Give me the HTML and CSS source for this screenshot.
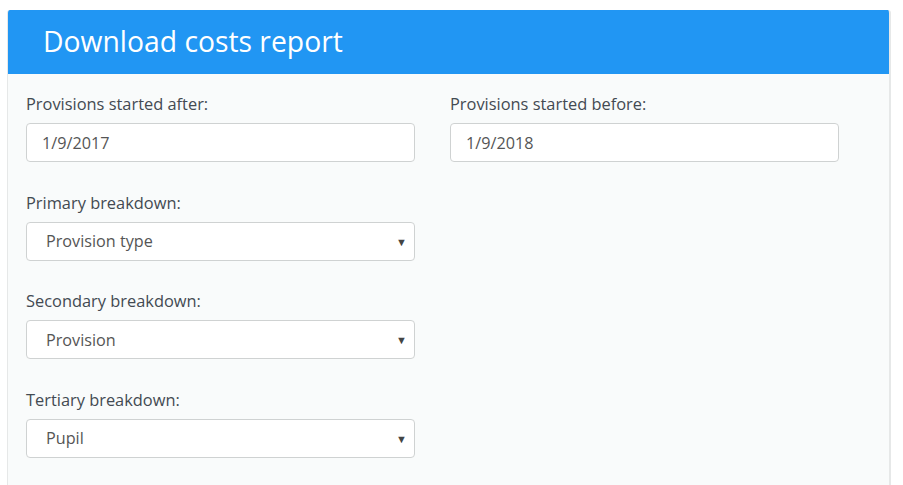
FILE: index.html
```html
<!DOCTYPE html>
<html>
<head>
<meta charset="utf-8">
<link rel="stylesheet" href="styles.css">
</head>
<body>
<div class="card">
  <div class="card-header">Download costs report</div>
  <div class="card-body">
    <div class="row">
      <div class="field">
        <label class="label">Provisions started after:</label>
        <div class="control">1/9/2017</div>
      </div>
      <div class="field">
        <label class="label">Provisions started before:</label>
        <div class="control">1/9/2018</div>
      </div>
    </div>
    <div class="field">
      <label class="label">Primary breakdown:</label>
      <div class="control select"><span>Provision type</span><span class="arrow">▼</span></div>
    </div>
    <div class="field">
      <label class="label">Secondary breakdown:</label>
      <div class="control select"><span>Provision</span><span class="arrow">▼</span></div>
    </div>
    <div class="field">
      <label class="label">Tertiary breakdown:</label>
      <div class="control select"><span>Pupil</span><span class="arrow">▼</span></div>
    </div>
  </div>
</div>
</body>
</html>
```

FILE: styles.css
```css
html, body {
  margin: 0;
  padding: 0;
  background: #ffffff;
  font-family: "Open Sans", "Liberation Sans", sans-serif;
}
body {
  padding: 10px 10px 0 7px;
}
.card {
  width: 884px;
  height: 475px;
  border-left: 1px solid #e6e8e8;
  border-right: 2px solid #e6e8e8;
  border-radius: 3px 3px 0 0;
  background: #f9fbfb;
  box-sizing: border-box;
  overflow: hidden;
}
.card-header {
  background: #2196f3;
  color: #ffffff;
  height: 64px;
  box-sizing: border-box;
  padding: 12px 0 0 35px;
  font-size: 28.3px;
  line-height: 38px;
}
.card-body {
  padding: 19px 0 0 18px;
}
.row {
  display: grid;
  grid-template-columns: 389px 389px;
  column-gap: 35px;
}
.field {
  width: 389px;
  margin-bottom: 29.5px;
}
.label {
  display: block;
  font-size: 16.4px;
  line-height: 22px;
  color: #434a52;
  margin-bottom: 8px;
}
.control {
  height: 39px;
  box-sizing: border-box;
  border: 1px solid #cfd2d2;
  border-radius: 4px;
  background: #ffffff;
  padding: 0 15px;
  display: flex;
  align-items: center;
  font-size: 16.2px;
  color: #555;
}
.select {
  padding-left: 19px;
  padding-right: 7px;
  justify-content: space-between;
}
.arrow {
  font-size: 11px;
  color: #444;
}
```
